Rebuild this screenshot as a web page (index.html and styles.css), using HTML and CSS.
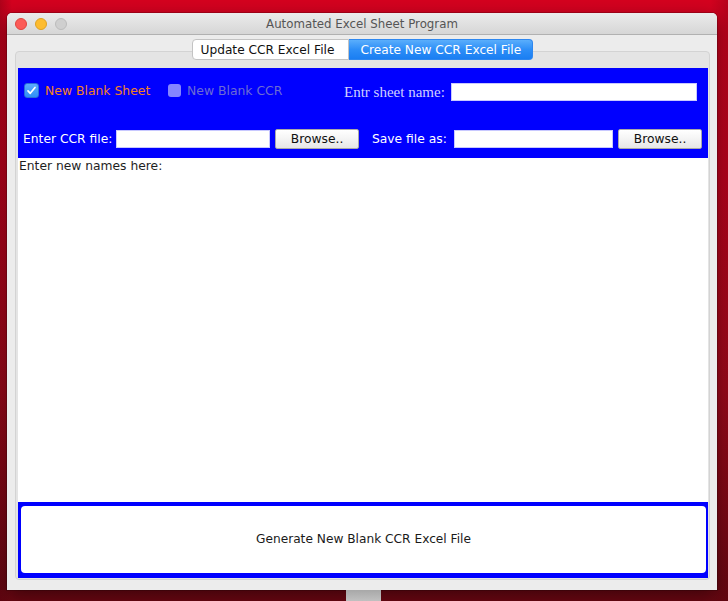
FILE: index.html
```html
<!DOCTYPE html>
<html>
<head>
<meta charset="utf-8">
<link rel="stylesheet" href="styles.css">
</head>
<body>
<div class="desktop">
  <div class="window">
    <div class="titlebar">
      <div class="lights">
        <span class="light red"></span>
        <span class="light yellow"></span>
        <span class="light gray"></span>
      </div>
      <div class="title">Automated Excel Sheet Program</div>
      <div></div>
    </div>
    <div class="body">
      <div class="tabs">
        <div class="tab">Update CCR Excel File</div>
        <div class="tab active">Create New CCR Excel File</div>
      </div>
      <div class="panel">
        <div class="top">
          <div class="row row1">
            <label class="check checked">
              <span class="box"><svg width="11" height="11" viewBox="0 0 11 11"><path d="M2 5.8 L4.3 8.3 L9 2.5" fill="none" stroke="#fff" stroke-width="1.7" stroke-linecap="round" stroke-linejoin="round"/></svg></span>
              <span class="ctext">New Blank Sheet</span>
            </label>
            <label class="check disabled">
              <span class="box"></span>
              <span class="ctext">New Blank CCR</span>
            </label>
            <span class="serif-label">Entr sheet name:</span>
            <span class="field f-sheet"></span>
          </div>
          <div class="row row2">
            <span class="lbl l-ccr">Enter CCR file:</span>
            <span class="field f-ccr"></span>
            <span class="btn b1">Browse..</span>
            <span class="lbl l-save">Save file as:</span>
            <span class="field f-save"></span>
            <span class="btn b2">Browse..</span>
          </div>
        </div>
        <div class="names">Enter new names here:</div>
        <div class="bottom">
          <div class="gen">Generate New Blank CCR Excel File</div>
        </div>
      </div>
    </div>
  </div>
  <div class="dock"></div>
</div>
</body>
</html>
```
FILE: styles.css
```css
html, body {
  margin: 0;
  padding: 0;
}
body {
  width: 728px;
  height: 601px;
  overflow: hidden;
  font-family: "DejaVu Sans", sans-serif;
  font-size: 12px;
  white-space: nowrap;
}
.desktop {
  width: 728px;
  height: 601px;
  background:
    linear-gradient(90deg, rgba(60,0,10,0.25) 0px, rgba(0,0,0,0) 12px, rgba(0,0,0,0) 710px, rgba(60,0,10,0.2) 728px),
    linear-gradient(180deg, #d4021f 0%, #c8031f 30%, #a80a1c 65%, #6c0712 100%);
  padding-top: 13px;
  padding-left: 7px;
  box-sizing: border-box;
  position: relative;
}
.window {
  width: 710px;
  height: 577px;
  background: #ececec;
  border-radius: 5px 5px 0 0;
  box-shadow: 0 6px 18px rgba(0,0,0,0.45), 0 0 0 1px rgba(0,0,0,0.18);
  display: flex;
  flex-direction: column;
}
.titlebar {
  height: 21px;
  display: grid;
  grid-template-columns: 1fr auto 1fr;
  align-items: center;
  background: linear-gradient(180deg, #ebebeb 0%, #d6d6d6 100%);
  border-bottom: 1px solid #b1b1b1;
  border-radius: 5px 5px 0 0;
}
.lights {
  display: flex;
  gap: 8px;
  padding-left: 8px;
}
.light {
  width: 12px;
  height: 12px;
  border-radius: 50%;
  box-sizing: border-box;
}
.red { background: #fc5b57; border: 1px solid #e0443e; }
.yellow { background: #fdbc2f; border: 1px solid #dfa123; }
.gray { background: #cfcfcf; border: 1px solid #bcbcbc; }
.title {
  color: #555555;
  font-size: 11.8px;
}
.body {
  flex: 1;
  padding: 4px 7px 10px 8px;
  display: flex;
  flex-direction: column;
}
.tabs {
  display: flex;
  justify-content: center;
  margin-bottom: -9px;
  position: relative;
  z-index: 1;
  padding-right: 1px;
}
.tab {
  height: 21px;
  box-sizing: border-box;
  display: flex;
  align-items: center;
  padding: 0 0 0 8px;
  background: #fff;
  border: 1px solid #c3c3c3;
  border-radius: 4px 0 0 4px;
  font-size: 12.2px;
  color: #111;
  width: 157px;
}
.tab.active {
  width: 184px;
  padding-left: 12px;
  border-radius: 0 4px 4px 0;
  border: 1px solid #2e87ef;
  border-left: none;
  background: linear-gradient(180deg, #5aaefc 0%, #2d8ef7 50%, #1a7ef2 100%);
  color: #fff;
}
.panel {
  flex: 1;
  background: #e4e4e4;
  border: 1px solid #d3d3d3;
  border-radius: 4px;
  padding: 16px 1px 1px 2px;
  display: flex;
  flex-direction: column;
}
.top {
  background: #0000ff;
  height: 90px;
  box-sizing: border-box;
  padding-top: 15px;
}
.row {
  display: flex;
  align-items: center;
}
.row1 {
  height: 18px;
}
.check {
  display: flex;
  align-items: center;
  align-self: flex-start;
  height: 15px;
  line-height: 15px;
}
.box {
  width: 15px;
  height: 15px;
  box-sizing: border-box;
  border-radius: 3px;
  display: flex;
  align-items: center;
  justify-content: center;
}
.checked {
  margin-left: 6px;
  width: 144px;
}
.checked .box {
  background: linear-gradient(180deg, #5cacfd 0%, #2f8ef7 100%);
  border: 1px solid #2a6ed8;
}
.checked .ctext {
  color: #f4801e;
  margin-left: 6px;
  font-size: 12.4px;
}
.disabled {
  width: 176px;
}
.disabled .box {
  width: 13px;
  height: 13px;
  background: #8585ff;
  border-radius: 3px;
}
.disabled .ctext {
  color: #6d6dd2;
  margin-left: 6px;
  font-size: 12.4px;
}
.serif-label {
  font-family: "Liberation Serif", serif;
  font-size: 15px;
  color: #d0d0ff;
  width: 107px;
}
.field {
  display: block;
  background: #fff;
  height: 18px;
  box-sizing: border-box;
  border: 1px solid #c8c8ff;
}
.f-sheet { width: 246px; }
.row2 {
  margin-top: 28px;
  height: 20px;
}
.lbl {
  color: #ffffff;
  font-size: 12.3px;
}
.l-ccr { margin-left: 5px; width: 93px; }
.f-ccr { width: 154px; }
.btn {
  display: flex;
  align-items: center;
  justify-content: center;
  height: 20px;
  box-sizing: border-box;
  width: 84px;
  background: linear-gradient(180deg, #ffffff 0%, #f4f4f4 50%, #e6e6e6 100%);
  border: 1px solid #a9a9a9;
  border-radius: 2px;
  color: #111;
  font-size: 12.3px;
}
.b1 { margin-left: 5px; }
.l-save { margin-left: 13px; width: 82px; }
.f-save { width: 159px; }
.b2 { margin-left: 5px; }
.names {
  flex: 1;
  background: #fff;
  color: #1e1e1e;
  font-size: 12.3px;
  padding: 0 0 0 1px;
  line-height: 17px;
}
.bottom {
  height: 76px;
  box-sizing: border-box;
  background: #0000ff;
  padding: 4px 2px 5px 3px;
  display: flex;
}
.gen {
  flex: 1;
  background: #fff;
  border-radius: 4px;
  display: flex;
  align-items: center;
  justify-content: center;
  color: #1a1a1a;
  font-size: 12.2px;
  padding-bottom: 1px;
}
.dock {
  position: absolute;
  left: 346px;
  top: 590px;
  width: 35px;
  height: 11px;
  background: linear-gradient(180deg, #a8a8a8 0%, #c0c0c0 100%);
}
```
